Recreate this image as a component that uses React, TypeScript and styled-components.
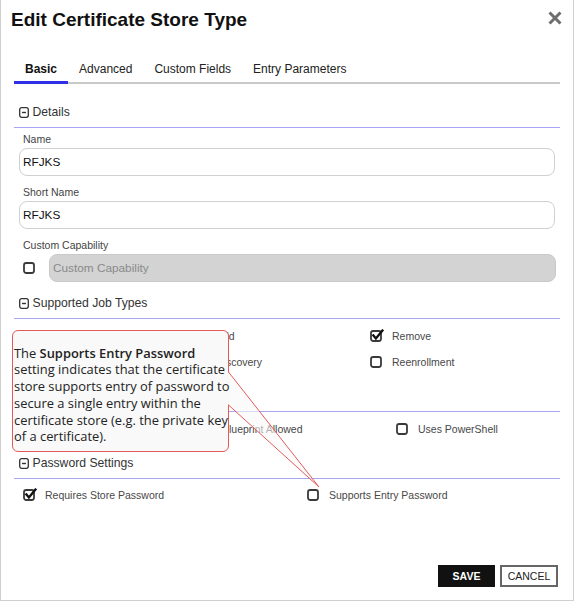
import React from "react";
import styled, { createGlobalStyle } from "styled-components";

const GlobalStyle = createGlobalStyle`
  html, body { margin: 0; padding: 0; background: #fff; }
  body { font-family: "Liberation Sans", Arial, sans-serif; }
  * { box-sizing: border-box; }
`;

const Dialog = styled.div`
  position: relative;
  width: 574px;
  height: 601px;
  border: 1px solid #cfcfcf;
  border-top: 0;
  background: #fff;
  display: flex;
  flex-direction: column;
  overflow: hidden;
`;

const Header = styled.div`
  display: flex;
  align-items: flex-start;
  justify-content: space-between;
  padding: 8px 11px 0 10px;
`;

const Title = styled.h1`
  margin: 0;
  font-size: 19px;
  line-height: 24px;
  font-weight: 700;
  color: #111;
`;

const CloseButton = styled.button`
  margin-top: 3px;
  padding: 0;
  border: 0;
  background: transparent;
  width: 14px;
  height: 14px;
  display: flex;
  cursor: pointer;
`;

const TabList = styled.div`
  display: flex;
  margin: 22px 13px 0;
  border-bottom: 2px solid #c9c9c9;
`;

const Tab = styled.div<{ $active?: boolean }>`
  padding: 8px 11px 4px;
  margin-bottom: -2px;
  font-size: 12px;
  line-height: 15px;
  color: ${(p) => (p.$active ? "#111" : "#222")};
  font-weight: ${(p) => (p.$active ? 700 : 400)};
  border-bottom: 3px solid ${(p) => (p.$active ? "#2f2fe6" : "transparent")};
`;

const Content = styled.div`
  padding: 20px 13px 0;
  display: flex;
  flex-direction: column;
  gap: 13px;
`;

const SectionHeader = styled.div`
  display: flex;
  align-items: center;
  gap: 4px;
  padding: 0 0 7px 4.5px;
  border-bottom: 1px solid #a6a6f2;
  font-size: 12.2px;
  line-height: 16px;
  color: #333;
`;

const SectionBody = styled.div<{ $pt?: number }>`
  padding: ${(p) => p.$pt ?? 5}px 5px 0;
  display: flex;
  flex-direction: column;
`;

const Field = styled.div`
  display: flex;
  flex-direction: column;
  & + & {
    margin-top: 10px;
  }
`;

const FieldLabel = styled.label`
  display: block;
  font-size: 10.5px;
  line-height: 13px;
  color: #444;
  padding-left: 4px;
  margin-bottom: 2px;
`;

const TextInput = styled.input`
  width: 100%;
  height: 28px;
  border: 1px solid #d0d0d0;
  border-radius: 8px;
  padding: 0 3px;
  font-family: "Liberation Sans", Arial, sans-serif;
  font-size: 11.8px;
  color: #111;
  background: #fff;
  outline: none;
  &:disabled {
    background: #d3d3d3;
    border-color: #c9c9c9;
  }
  &::placeholder {
    color: #8a8a8a;
  }
`;

const CapabilityRow = styled.div`
  display: flex;
  align-items: center;
  gap: 12px;
  padding-left: 4px;
  & > input {
    flex: 1;
    margin-right: -1px;
  }
`;

const CheckGrid = styled.div<{ $cols: string }>`
  display: grid;
  grid-template-columns: ${(p) => p.$cols};
  padding-left: 4px;
`;

const CheckItem = styled.label`
  display: flex;
  align-items: center;
  gap: 8px;
  height: 26px;
  font-size: 10.5px;
  color: #484848;
  white-space: nowrap;
`;

const Footer = styled.div`
  margin-top: auto;
  display: flex;
  justify-content: flex-end;
  gap: 5px;
  padding: 0 15px 13px 0;
`;

const Button = styled.button<{ $primary?: boolean }>`
  height: 22px;
  width: ${(p) => (p.$primary ? 57 : 58)}px;
  padding: 0;
  font-family: "Liberation Sans", Arial, sans-serif;
  font-size: 10.5px;
  font-weight: ${(p) => (p.$primary ? 700 : 400)};
  color: ${(p) => (p.$primary ? "#fff" : "#222")};
  background: ${(p) => (p.$primary ? "#111" : "#fff")};
  border: ${(p) => (p.$primary ? "0" : "2px solid #666")};
  cursor: pointer;
`;

const Callout = styled.div`
  position: absolute;
  left: 11px;
  top: 330px;
  width: 217px;
  height: 122px;
  border: 1px solid #e25a5a;
  border-radius: 6px;
  background: #f9f9f9;
  z-index: 10;
  padding: 13.5px 0 0 1px;
`;

const Pointer = styled.svg`
  position: absolute;
  left: 210px;
  top: 32px;
  z-index: 1;
  overflow: visible;
`;

const CalloutText = styled.p`
  position: relative;
  z-index: 2;
  margin: 0;
  font-family: "Open Sans", "Noto Sans", sans-serif;
  font-size: 12.9px;
  line-height: 16.8px;
  color: #222;
  white-space: nowrap;
  & b {
    font-weight: 600;
  }
`;

const Box = ({ checked }: { checked?: boolean }) => (
  <svg width="14" height="14" viewBox="0 0 14 14" style={{ flexShrink: 0 }}>
    <rect x="1" y="2" width="10" height="10" rx="2.2" fill="#fff" stroke="#3a3a3a" strokeWidth="1.8" />
    {checked && (
      <path d="M3.4 6.4 L5.9 9.4 L12.4 1.6" fill="none" stroke="#111" strokeWidth="2.4" strokeLinecap="square" />
    )}
  </svg>
);

const CollapseIcon = () => (
  <svg width="10" height="11" viewBox="0 0 10 11">
    <rect x="0.7" y="0.7" width="8.6" height="9.6" rx="2" fill="none" stroke="#333" strokeWidth="1.3" />
    <line x1="3" y1="5.5" x2="7" y2="5.5" stroke="#333" strokeWidth="1.4" />
  </svg>
);

const Section = ({ title, children, pt }: { title: string; children: React.ReactNode; pt?: number }) => (
  <div>
    <SectionHeader>
      <CollapseIcon />
      <span>{title}</span>
    </SectionHeader>
    <SectionBody $pt={pt}>{children}</SectionBody>
  </div>
);

const Check = ({ label, checked }: { label: string; checked?: boolean }) => (
  <CheckItem>
    <Box checked={checked} />
    <span>{label}</span>
  </CheckItem>
);

export default function App() {
  return (
    <>
      <GlobalStyle />
      <Dialog>
        <Header>
          <Title>Edit Certificate Store Type</Title>
          <CloseButton aria-label="Close">
            <svg width="14" height="14" viewBox="0 0 14 14">
              <path d="M1.5 1.5 L12.5 12.5 M12.5 1.5 L1.5 12.5" stroke="#6e6e6e" strokeWidth="3" />
            </svg>
          </CloseButton>
        </Header>
        <TabList>
          <Tab $active>Basic</Tab>
          <Tab>Advanced</Tab>
          <Tab>Custom Fields</Tab>
          <Tab>Entry Parameters</Tab>
        </TabList>
        <Content>
          <Section title="Details">
            <Field>
              <FieldLabel>Name</FieldLabel>
              <TextInput defaultValue="RFJKS" />
            </Field>
            <Field>
              <FieldLabel>Short Name</FieldLabel>
              <TextInput defaultValue="RFJKS" />
            </Field>
            <Field>
              <FieldLabel>Custom Capability</FieldLabel>
              <CapabilityRow>
                <Box />
                <TextInput disabled placeholder="Custom Capability" />
              </CapabilityRow>
            </Field>
          </Section>
          <Section title="Supported Job Types" pt={4}>
            <CheckGrid $cols="171px 176px 1fr">
              <Check label="Inventory" />
              <Check label="Add" />
              <Check label="Remove" checked />
              <Check label="Create" />
              <Check label="Discovery" />
              <Check label="Reenrollment" />
            </CheckGrid>
          </Section>
          <Section title="General Settings" pt={4}>
            <CheckGrid $cols="177px 196px 1fr">
              <Check label="Needs Server" />
              <Check label="Blueprint Allowed" />
              <Check label="Uses PowerShell" />
            </CheckGrid>
          </Section>
          <Section title="Password Settings" pt={3}>
            <CheckGrid $cols="284px 1fr">
              <Check label="Requires Store Password" checked />
              <Check label="Supports Entry Password" />
            </CheckGrid>
          </Section>
        </Content>
        <Footer>
          <Button $primary>SAVE</Button>
          <Button>CANCEL</Button>
        </Footer>
        <Callout>
          <Pointer width="100" height="130" viewBox="0 0 100 130">
            <polygon points="5.5,9 96,124 5.5,42" fill="rgba(249,249,249,0.6)" />
            <rect x="4.5" y="9.5" width="2.5" height="32" fill="#f9f9f9" />
            <path d="M5.5 9 L96 124 L5.5 42" fill="none" stroke="#e25a5a" strokeWidth="1" />
          </Pointer>
          <CalloutText>
            The <b>Supports Entry Password</b>
            <br />
            setting indicates that the certificate
            <br />
            store supports entry of password to
            <br />
            secure a single entry within the
            <br />
            certificate store (e.g. the private key
            <br />
            of a certificate).
          </CalloutText>
        </Callout>
      </Dialog>
    </>
  );
}
